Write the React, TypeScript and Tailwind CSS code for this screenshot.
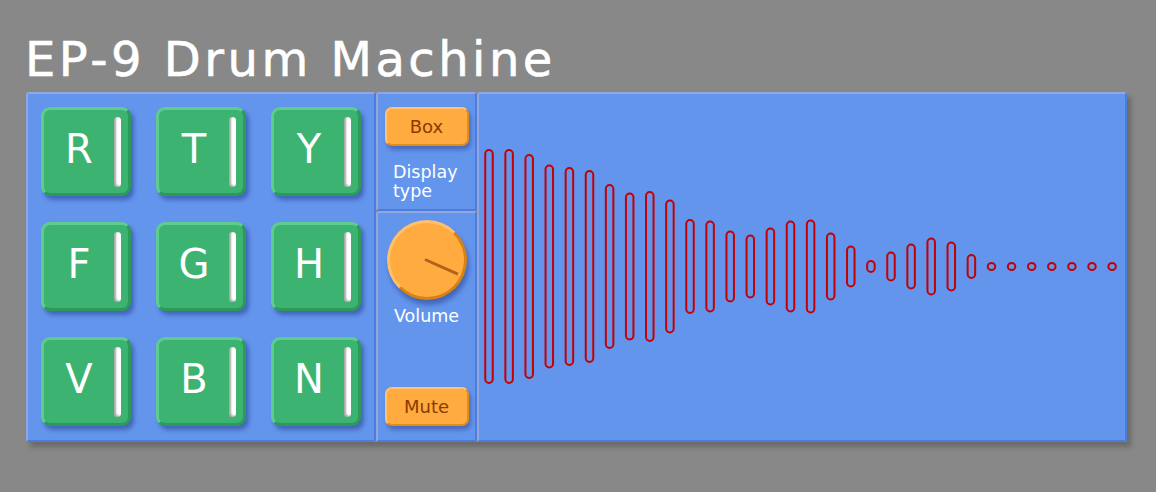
import React from "react"

const pads = ["R", "T", "Y", "F", "G", "H", "V", "B", "N"]

// half heights of the decaying wave bars, left to right
const wave = [
  117.5, 117.5, 112.5, 102, 99.5, 96.5, 82.5, 74, 75.5, 67, 47.5, 46, 36, 32, 39, 46, 47, 34, 21, 6.5, 15, 23, 29, 25,
  12.5, 4.5, 4.5, 4.5, 4.5, 4.5, 4.5, 4.5,
]

const font = "font-['DejaVu_Sans',sans-serif]"

function Pad({ letter }: { letter: string }) {
  return (
    <div className="w-[90px] h-[89px] flex items-center rounded-[9px] bg-[#3cb371] border-[3px] border-t-[#5dcc8e] border-l-[#5dcc8e] border-b-[#2b9a5b] border-r-[#2b9a5b] pr-[7px] shadow-[3px_4px_4px_rgba(25,45,120,0.45)]">
      <span className={`flex-1 text-center text-white text-[40px] leading-none -mt-[6px] ${font}`}>{letter}</span>
      <span className="w-[7px] h-[70px] mt-[1px] rounded-full bg-white shadow-[inset_2px_-1px_2px_rgba(0,0,0,0.35)]" />
    </div>
  )
}

function OrangeButton({ label }: { label: string }) {
  return (
    <button className="mx-auto w-[84px] h-[39px] rounded-[7px] bg-[#ffab40] border-2 border-t-[#ffc36f] border-l-[#ffc36f] border-b-[#e38d17] border-r-[#e38d17] text-[#8b3a00] text-[18px] leading-none shadow-[2px_4px_4px_rgba(25,45,120,0.4)]">
      {label}
    </button>
  )
}

const section =
  "border-2 rounded-[3px] border-t-[#93a7de] border-l-[#93a7de] border-b-[#4b7ddd] border-r-[#4b7ddd] bg-[#6495ed]"

export default function App() {
  return (
    <div className={`min-h-[492px] bg-[#888888] pt-[35px] pl-[26px] ${font}`}>
      <h1 className="text-white text-[48px] leading-none tracking-[3.5px] -ml-[1px] [-webkit-text-stroke:0.6px_white]">
        EP-9 Drum Machine
      </h1>

      <div className="mt-[9px] flex w-[1101px] h-[350px] shadow-[4px_5px_5px_rgba(0,0,0,0.22)]">
        {/* pads */}
        <div className={`${section} w-[350px] pl-[13px] pt-[13px]`}>
          <div className="grid grid-cols-[90px_90px_90px] gap-x-[25px] gap-y-[26px]">
            {pads.map((p) => (
              <Pad key={p} letter={p} />
            ))}
          </div>
        </div>

        {/* controls */}
        <div className="w-[101px] flex flex-col">
          <div className={`${section} h-[119px] flex flex-col pt-[13px]`}>
            <OrangeButton label="Box" />
            <p className="mt-[17px] pl-[15px] text-white text-[17.5px] leading-[19px]">
              Display
              <br />
              type
            </p>
          </div>
          <div className={`${section} flex-1 flex flex-col items-center pt-[7px] pb-[14px]`}>
            <div className="relative w-[80px] h-[80px] rounded-full bg-[#ffab40] border-[3px] border-t-[#ffc06a] border-l-[#ffc06a] border-b-[#d98214] border-r-[#d98214] shadow-[2px_5px_5px_rgba(25,45,120,0.45)]">
              <div className="absolute left-1/2 top-1/2 -mt-[2px] -ml-[2px] w-[36px] h-[3px] origin-left rotate-[24deg] bg-[#b0621a]" />
            </div>
            <span className="mt-[7px] text-white text-[17.5px] leading-[19px]">Volume</span>
            <div className="flex-1" />
            <OrangeButton label="Mute" />
          </div>
        </div>

        {/* waveform display */}
        <div className={`${section} w-[650px] flex items-center justify-center`}>
          <svg width="646" height="346" viewBox="0 0 646 346">
            {wave.map((hh, i) => {
              const cx = 10 + i * 20.1
              return (
                <rect
                  key={i}
                  x={cx - 3.75}
                  y={172.5 - hh + 1}
                  width={7.5}
                  height={hh * 2 - 2}
                  rx={3.75}
                  fill="none"
                  stroke="#c40000"
                  strokeWidth={2}
                />
              )
            })}
          </svg>
        </div>
      </div>
    </div>
  )
}
